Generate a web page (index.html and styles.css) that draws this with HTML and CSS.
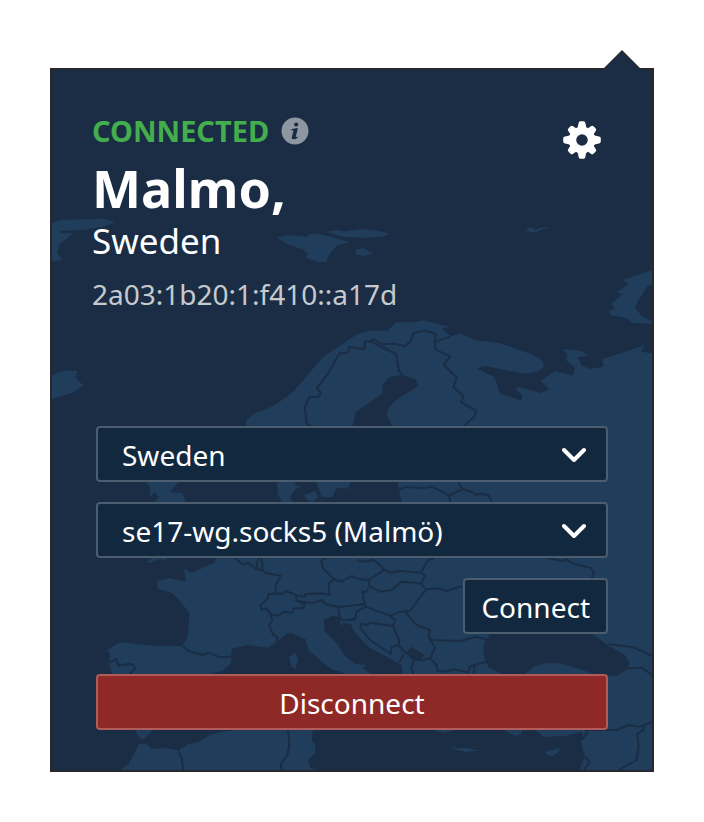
FILE: index.html
```html
<!DOCTYPE html>
<html lang="en">
<head>
<meta charset="utf-8">
<meta name="viewport" content="width=device-width, initial-scale=1">
<title>VPN connection</title>
<link rel="stylesheet" href="styles.css">
</head>
<body>
<main class="panel">
  <svg class="pointer" viewBox="0 0 38 22" aria-hidden="true">
    <path class="pointer-edge" d="M0 19 19 0 38 19Z"/>
    <path class="pointer-fill" d="M0 21 19 2 38 21V22H0Z"/>
  </svg>
  <svg class="map" viewBox="156 210 1800 2100" preserveAspectRatio="xMidYMid slice" aria-hidden="true">
    <g class="land">
      <!-- Greenland, Iceland -->
      <path d="M156 670 180 660 310 656 348 666 310 680 248 690 182 693 182 699 220 700 180 732 172 760 188 780 156 784Z"/>
      <path d="M156 1126 195 1111 232 1113 226 1133 250 1156 218 1178 156 1197Z"/>
      <!-- Arctic islands -->
      <path d="M830 712 865 706 920 710 932 702 955 702 1000 712 1048 727 1010 738 990 760 978 785 958 787 915 772 926 763 910 749 860 732Z"/>
      <path d="M978 695 1010 690 1035 694 1080 687 1140 694 1168 700 1150 710 1090 714 1030 710Z"/>
      <path d="M1064 748 1095 745 1106 755 1124 758 1092 768 1064 762 1070 755Z"/>
      <path d="M1578 692 1585 683 1600 683 1606 690 1622 683 1656 682 1630 687 1612 695 1595 697Z"/>
      <path d="M1956 810 1905 827 1870 840 1886 853 1848 877 1868 883 1834 910 1844 926 1826 934 1832 946 1880 955 1895 968 1956 972 1956 963 1925 948 1904 921 1940 861 1956 852Z"/>
      <!-- Mainland -->
      <path d="M738 1262 760 1243 826 1215 878 1177 923 1125 972 1068 1010 1045 1050 1017 1072 1003 1115 991 1162 992 1190 967 1240 967 1272 961 1346 980 1325 988 1352 1008 1382 1001 1425 1020 1500 1030 1595 1063 1625 1080 1632 1098 1618 1113 1575 1122 1455 1098 1430 1105 1484 1132 1500 1181 1566 1202 1566 1183 1547 1170 1556 1160 1623 1179 1647 1168 1622 1142 1665 1113 1718 1127 1725 1103 1698 1080 1702 1062 1685 1047 1748 1054 1762 1068 1734 1072 1744 1096 1770 1107 1810 1100 1807 1077 1935 1036 1922 1055 1956 1060V2310H1738L1748 2285 1755 2270 1746 2240 1742 2220 1750 2205 1744 2195 1700 2207 1632 2211 1605 2190 1566 2192 1562 2204 1545 2208 1512 2190 1480 2170 1450 2100 1470 2040 1400 2050 1340 2100 1370 2190 1330 2199 1300 2190 1240 2110 1208 2030 1205 1995 1150 1965 1110 1945 1080 1915 1062 1893 1052 1872 1030 1868 1025 1880 1020 1870 1020 1852 998 1848 972 1860 973 1892 1015 1935 1032 1965 1065 1991 1098 1996 1088 2004 1112 2022 1140 2070 1100 2100 1060 2040 1025 2016 1000 2010 968 1987 926 1951 916 1917 872 1898 860 1902 832 1924 802 1943 742 1935 695 1947 693 1990 668 2013 630 2022 560 2150 460 2190 430 2217 418 2214 405 2190 350 2150 338 2022 328 2000 330 1962 322 1950 360 1926 415 1933 470 1938 545 1938 563 1914 569 1840 540 1802 518 1780 474 1767 470 1743 508 1735 558 1745 552 1708 574 1718 644 1688 648 1674 760 1560 845 1506 832 1480V1440H880L888 1456 903 1460 888 1466 870 1490 878 1506 960 1560 1205 1506 1198 1475 1192 1446V1380L1177 1278 1172 1268 1160 1241 1168 1222 1185 1202 1255 1158 1248 1140 1210 1124 1168 1132 1145 1157 1150 1179 1068 1235 1058 1278 1052 1446 1044 1466 1010 1463 997 1492 965 1490 948 1446 860 1330 740 1278Z"/>
      <!-- Zealand, Britain -->
      <path d="M913 1484 945 1473 955 1490 940 1506 920 1500Z"/>
      <path d="M438 1446 450 1460 450 1490 463 1477 476 1490 465 1506 558 1506 545 1479 510 1476 535 1446Z"/>
      <path d="M440 1685 458 1674 502 1674 498 1680 475 1678 448 1690Z"/>
      <!-- Corsica, Crete, Cyprus -->
      <path d="M868 1970 888 1957 894 1980 886 2007 874 2000Z"/>
      <path d="M1353 2235 1370 2245 1400 2243 1435 2252 1395 2256 1360 2246Z"/>
      <path d="M1635 2256 1678 2244 1678 2254 1658 2268 1640 2264Z"/>
      <!-- North Africa -->
      <path d="M360 2310 385 2292 400 2265 417 2232 438 2231 455 2247 490 2243 535 2251 565 2232 598 2225 625 2207 650 2198 710 2190H942L935 2198 936 2223 946 2232 945 2260 925 2280 930 2304 950 2310Z"/>
    </g>
    <g class="sea">
      <path d="M1470 1902 1452 1930 1450 1965 1465 2000 1505 2022 1575 2022 1600 2002 1630 1990 1680 1990 1730 2005 1790 2024 1850 2028 1885 2005 1888 1990 1875 1965 1830 1940 1780 1904 1640 1860Z"/>
      <path d="M1218 1960 1235 1940 1272 1965 1258 1982 1240 1982Z"/>
    </g>
    <g class="borders">
      <!-- Scandinavia -->
      <path d="M932 1278 920 1270 914 1222 928 1191 955 1191 963 1179 950 1166 986 1118 1018 1060 1044 1058 1048 1041 1094 1047 1094 1025 1112 1024 1120 1017 1148 1033 1185 1031 1213 1039 1233 1022 1240 1001 1273 991 1308 1002 1304 1025 1352 1010"/>
      <path d="M1112 1024 1188 1062 1197 1113 1208 1124"/>
      <path d="M1304 1025 1306 1048 1350 1070 1331 1094 1371 1133 1360 1161 1390 1187 1384 1207 1428 1232 1423 1250 1392 1278"/>
      <!-- Baltics -->
      <path d="M1196 1470 1220 1460 1265 1465 1295 1460 1318 1470 1347 1487 1387 1467 1375 1446M1347 1487 1351 1506M1387 1467 1420 1478 1428 1485 1440 1480 1468 1488 1475 1506"/>
      <!-- Western Europe -->
      <path d="M705 1674 728 1693 745 1690 770 1708 785 1710 800 1720 842 1727 828 1755 826 1780M775 1674 770 1695 772 1708M783 1674 788 1690 785 1710"/>
      <path d="M826 1782 804 1783 804 1795 782 1815 783 1830 800 1825 810 1840 832 1848 855 1835 875 1838 882 1825 910 1825 915 1812 890 1802 888 1785 858 1773 850 1780Z"/>
      <path d="M888 1785 913 1790 917 1782 960 1780 988 1785 986 1750 1002 1738 1025 1745 1055 1728 1080 1738M890 1802 935 1810 965 1800 978 1812 1015 1821 1045 1818 1095 1812M980 1674 963 1682 970 1705 1002 1738"/>
      <path d="M810 1840 817 1860 807 1875 820 1905 832 1910 830 1924M1015 1821 1017 1845 1025 1860 1065 1860 1070 1835 1098 1820"/>
      <path d="M548 1938 565 1953 610 1965 625 1958 660 1972 693 1970M332 1986 350 1977 356 1997 382 1993 398 1992 406 2008 388 2022"/>
      <!-- Central Europe -->
      <path d="M1072 1680 1095 1685 1120 1680 1135 1690 1152 1708 1142 1717 1105 1740 1080 1738M1152 1710 1175 1718 1200 1712 1240 1717 1265 1718 1275 1728 1263 1750 1205 1745 1175 1770 1140 1775 1110 1760 1105 1740M1305 1674 1285 1680 1263 1715"/>
      <path d="M1105 1765 1100 1775 1088 1775 1092 1805 1098 1820 1135 1835 1170 1847 1200 1835 1230 1833 1265 1785 1278 1770 1263 1750M1065 1855 1050 1860M1278 1768 1315 1765 1340 1773 1385 1758"/>
      <!-- Balkans -->
      <path d="M1080 1882 1085 1870 1102 1875 1110 1868 1180 1878 1188 1900 1198 1920 1195 1935 1175 1942 1172 1962 1110 1920ZM1170 1847 1185 1860 1180 1878M1215 1835 1250 1875 1290 1890 1285 1910 1305 1942 1290 1975 1258 1982M1195 1935 1220 1962M1210 1965 1198 1985M1240 1982 1235 2005 1240 2022"/>
      <path d="M1285 1910 1300 1920 1380 1923 1430 1910 1468 1922M1290 1975 1310 1995 1312 2012 1335 2015 1360 2008 1405 2017 1410 1998 1425 2000 1420 2020M1410 1998 1460 1985"/>
      <!-- Eastern Europe, Caucasus, Levant -->
      <path d="M1640 1674 1690 1683 1700 1678 1722 1692 1772 1703 1782 1720 1775 1734M1825 1932 1900 1942 1956 1967M1885 2005 1925 2003 1956 2025"/>
      <path d="M1760 2190H1850L1885 2175 1920 2180 1956 2165M1935 2172 1930 2190 1912 2202 1916 2240 1910 2280 1856 2310M1744 2220 1762 2200 1756 2190M1755 2272 1770 2285 1752 2310"/>
      <!-- Maghreb -->
      <path d="M535 2251 545 2275 550 2310M864 2190 868 2235 862 2265 842 2292 845 2310"/>
    </g>
  </svg>

  <header class="header">
    <div class="status-block">
      <p class="status">
        <span>CONNECTED</span>
        <svg class="info" viewBox="0 0 28 28" role="img" aria-label="Information">
          <circle class="info-disc" cx="14" cy="14" r="13.5"/>
          <circle class="info-mark" cx="15.2" cy="7.5" r="2.1"/>
          <path class="info-mark" d="M10 12.4C12 11.6 14.5 11.2 17 11.2L14.8 19.2C14.6 20.2 15.2 20.1 17 19.4L16.8 20.4C15.4 21.6 14 22.3 12.5 22.3C11 22.3 10.5 21.3 10.9 19.8L12.4 14.2C12.6 13.3 12 13.2 10 13.3Z"/>
        </svg>
      </p>
      <h1 class="city">Malmo,</h1>
      <p class="country">Sweden</p>
      <p class="address">2a03:1b20:1:f410::a17d</p>
    </div>
    <button class="settings" type="button" aria-label="Settings">
      <svg viewBox="-19 -19 38 38" aria-hidden="true">
        <defs>
          <path id="tooth" d="M-5.5-11Q-3.8-13-3.4-17Q-3.2-18.8-1.6-18.8H1.6Q3.2-18.8 3.4-17Q3.8-13 5.5-11Z"/>
        </defs>
        <path fill-rule="evenodd" d="M0-13.2A13.2 13.2 0 1 1 0 13.2A13.2 13.2 0 1 1 0-13.2ZM0-5.8A5.8 5.8 0 1 0 0 5.8A5.8 5.8 0 1 0 0-5.8Z"/>
        <use href="#tooth"/>
        <use href="#tooth" transform="rotate(45) translate(0 1)"/>
        <use href="#tooth" transform="rotate(90)"/>
        <use href="#tooth" transform="rotate(135) translate(0 1)"/>
        <use href="#tooth" transform="rotate(180)"/>
        <use href="#tooth" transform="rotate(225) translate(0 1)"/>
        <use href="#tooth" transform="rotate(270)"/>
        <use href="#tooth" transform="rotate(315) translate(0 1)"/>
      </svg>
    </button>
  </header>

  <form class="form">
    <div class="field">
      <select class="control" aria-label="Country">
        <option>Sweden</option>
      </select>
      <svg class="chevron" viewBox="0 -2 24 16" aria-hidden="true"><path d="M2 2 12 12 22 2"/></svg>
    </div>
    <div class="field">
      <select class="control" aria-label="Server">
        <option>se17-wg.socks5 (Malmö)</option>
      </select>
      <svg class="chevron" viewBox="0 -2 24 16" aria-hidden="true"><path d="M2 2 12 12 22 2"/></svg>
    </div>
    <button class="control connect" type="button">Connect</button>
    <button class="control disconnect" type="button">Disconnect</button>
  </form>
</main>
</body>
</html>
```
FILE: styles.css
```css
* {
  box-sizing: border-box;
}

body {
  margin: 0;
  padding: 68px 50px 50px;
  background: #fff;
  color: #fff;
  font-family: "Segoe UI", "Noto Sans", sans-serif;
  font-size: 28px;
}

.panel {
  position: relative;
  padding: 40px 44px;
  border: 2px solid #26282d;
  background: #1a2d44;
}

.pointer {
  position: absolute;
  top: -20px;
  right: 11px;
  width: 38px;
  height: 22px;
}

.pointer-fill {
  fill: #1a2d44;
}

.pointer-edge {
  fill: #26282d;
}

.map {
  position: absolute;
  inset: 0;
  width: 100%;
  height: 100%;
}

.land {
  fill: #203d5b;
}

.sea {
  fill: #1a2d44;
}

.borders {
  fill: none;
  stroke: #1a2d44;
  stroke-width: 6;
  stroke-linejoin: round;
}

.header,
.form {
  position: relative;
}

.header {
  display: flex;
  justify-content: space-between;
  align-items: flex-start;
  margin: 0 7px 114px -4px;
}

.status,
.city,
.country,
.address {
  margin: 0;
}

.status {
  display: flex;
  align-items: center;
  gap: 12px;
  line-height: 42px;
  font-weight: 700;
  font-size: 29px;
  color: #44ad4d;
}

.info {
  width: 28px;
  height: 28px;
}

.info-disc {
  fill: #8d96a1;
}

.info-mark {
  fill: #1a2d44;
}

.city {
  font-size: 52px;
  line-height: 72px;
}

.country {
  font-size: 35px;
  line-height: 34px;
}

.address {
  margin-top: 18px;
  line-height: 36px;
  color: #c6cacf;
}

.settings {
  width: 38px;
  height: 38px;
  margin-top: 11px;
  padding: 0;
  border: 0;
  background: none;
}

.settings svg {
  display: block;
  width: 100%;
  fill: #fff;
}

.form {
  display: grid;
  gap: 20px;
}

.field {
  display: grid;
  align-items: center;
}

.field > * {
  grid-area: 1 / 1;
}

.control {
  width: 100%;
  height: 56px;
  margin: 0;
  padding: 2px 24px 0;
  border: 2px solid #4c5d70;
  border-radius: 4px;
  appearance: none;
  background: #12283f;
  color: #fff;
  font: inherit;
}

.chevron {
  justify-self: end;
  width: 24px;
  height: 16px;
  margin-right: 22px;
  fill: none;
  stroke: #fff;
  stroke-width: 4;
  stroke-linecap: round;
  stroke-linejoin: round;
  pointer-events: none;
}

.connect {
  justify-self: end;
  width: auto;
  padding: 2px 16px 0;
}

.disconnect {
  margin-top: 20px;
  border-color: #b05c5b;
  background: #8f2927;
}
```
